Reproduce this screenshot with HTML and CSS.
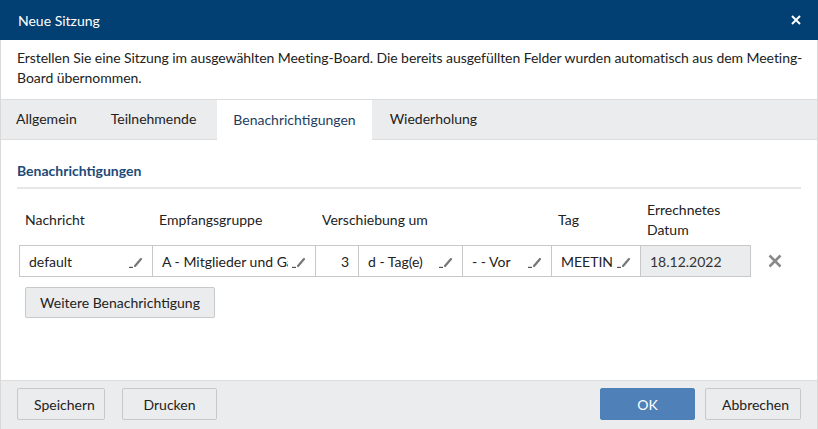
FILE: index.html
```html
<!DOCTYPE html>
<html lang="de">
<head>
<meta charset="utf-8">
<link rel="stylesheet" href="styles.css">
</head>
<body>
<div class="dialog">
  <div class="titlebar">
    <span class="title">Neue Sitzung</span>
    <span class="close">
      <svg width="10" height="10" viewBox="0 0 10 10"><path d="M1 1 L9 9 M9 1 L1 9" stroke="#fff" stroke-width="2"/></svg>
    </span>
  </div>
  <div class="intro">Erstellen Sie eine Sitzung im ausgewählten Meeting-Board. Die bereits ausgefüllten Felder wurden automatisch aus dem Meeting-Board übernommen.</div>
  <div class="tabs">
    <div class="tab">Allgemein</div>
    <div class="tab">Teilnehmende</div>
    <div class="tab active">Benachrichtigungen</div>
    <div class="tab">Wiederholung</div>
  </div>
  <div class="content">
    <div class="section-title">Benachrichtigungen</div>
    <div class="grid">
      <div class="head">Nachricht</div>
      <div class="head">Empfangsgruppe</div>
      <div class="head span3">Verschiebung um</div>
      <div class="head">Tag</div>
      <div class="head">Errechnetes<br>Datum</div>
      <div class="head"></div>

      <div class="cell first"><span class="val">default</span><svg class="pen" width="14" height="12" viewBox="0 0 14 12"><path d="M0 11.5 H4" stroke="#555" stroke-width="1.4"/><path d="M6 10 L12 3" stroke="#777" stroke-width="2.2" stroke-linecap="round"/></svg></div>
      <div class="cell"><span class="val">A - Mitglieder und Gäste</span><svg class="pen" width="14" height="12" viewBox="0 0 14 12"><path d="M0 11.5 H4" stroke="#555" stroke-width="1.4"/><path d="M6 10 L12 3" stroke="#777" stroke-width="2.2" stroke-linecap="round"/></svg></div>
      <div class="cell num"><span class="val">3</span></div>
      <div class="cell"><span class="val">d - Tag(e)</span><svg class="pen" width="14" height="12" viewBox="0 0 14 12"><path d="M0 11.5 H4" stroke="#555" stroke-width="1.4"/><path d="M6 10 L12 3" stroke="#777" stroke-width="2.2" stroke-linecap="round"/></svg></div>
      <div class="cell"><span class="val">- - Vor</span><svg class="pen" width="14" height="12" viewBox="0 0 14 12"><path d="M0 11.5 H4" stroke="#555" stroke-width="1.4"/><path d="M6 10 L12 3" stroke="#777" stroke-width="2.2" stroke-linecap="round"/></svg></div>
      <div class="cell"><span class="val">MEETING</span><svg class="pen" width="14" height="12" viewBox="0 0 14 12"><path d="M0 11.5 H4" stroke="#555" stroke-width="1.4"/><path d="M6 10 L12 3" stroke="#777" stroke-width="2.2" stroke-linecap="round"/></svg></div>
      <div class="cell readonly"><span class="val">18.12.2022</span></div>
      <div class="del"><svg width="14" height="14" viewBox="0 0 14 14"><path d="M1.5 1.5 L12.5 12.5 M12.5 1.5 L1.5 12.5" stroke="#8a8a8a" stroke-width="2.6"/></svg></div>
    </div>
    <button class="btn more">Weitere Benachrichtigung</button>
  </div>
  <div class="footer">
    <div class="group">
      <button class="btn fbtn">Speichern</button>
      <button class="btn fbtn">Drucken</button>
    </div>
    <div class="group right">
      <button class="btn fbtn primary">OK</button>
      <button class="btn fbtn">Abbrechen</button>
    </div>
  </div>
</div>
</body>
</html>
```

FILE: styles.css
```css
* { box-sizing: border-box; }
html, body { margin: 0; padding: 0; }
body {
  width: 818px;
  height: 429px;
  font-family: Lato, "Noto Sans", sans-serif;
  font-size: 14px;
  color: #222;
  background: #fff;
  overflow: hidden;
}
.dialog {
  width: 818px;
  height: 429px;
  display: flex;
  flex-direction: column;
  border-left: 1px solid #d9d9d9;
  border-right: 1px solid #d9d9d9;
}
.titlebar {
  height: 40px;
  margin: 0 -1px;
  background: #023f72;
  color: #fff;
  display: flex;
  align-items: center;
  justify-content: space-between;
  padding: 0 17px 0 18px;
}
.title { font-size: 14px; }
.close { display: flex; align-items: center; }
.intro {
  height: 59px;
  padding: 8px 10px 0 16px;
  line-height: 20px;
  font-size: 14px;
  letter-spacing: -0.06px;
  color: #222;
}
.tabs {
  height: 41px;
  background: #ebecee;
  border-top: 1px solid #dcdcdc;
  border-bottom: 1px solid #dcdcdc;
  display: flex;
  align-items: stretch;
}
.tab {
  padding: 0 17px 0 15px;
  display: flex;
  align-items: center;
  font-size: 14px;
  color: #222;
  padding-bottom: 2px;
}
.tab + .tab { margin-left: 2px; }
.tab.active {
  background: #fff;
  margin-bottom: -1px;
  color: #1d3d60;
  padding-left: 16px;
  padding-right: 16px;
  margin-left: 4px;
}
.tab.active + .tab { margin-left: 3px; }
.content {
  flex: 1;
  padding: 22px 16px 0 16px;
}
.section-title {
  font-weight: 700;
  color: #1d4a78;
  font-size: 14px;
  padding-bottom: 8px;
  border-bottom: 2px solid #e6e6e6;
}
.grid {
  margin-top: 10px;
  margin-left: 2px;
  display: grid;
  grid-template-columns: 134px 163px 43px 104px 89px 89px 110px 48px;
  grid-template-rows: 46px 32px;
}
.head {
  display: flex;
  align-items: center;
  padding-left: 6px;
  padding-bottom: 5px;
  line-height: 20px;
  font-size: 14px;
  color: #222;
}
.head.span3 { grid-column: span 3; }
.cell {
  border: 1px solid #c8c8c8;
  border-left: none;
  display: flex;
  align-items: center;
  padding: 0 9px;
  gap: 4px;
  font-size: 14px;
  overflow: hidden;
  background: #fff;
}
.cell.first { border-left: 1px solid #c8c8c8; }
.val {
  flex: 1;
  min-width: 0;
  white-space: nowrap;
  overflow: hidden;
}
.cell.num { justify-content: flex-end; }
.cell.num .val { flex: none; }
.cell.readonly { background: #ebecee; color: #333; }
.pen { flex: none; margin-top: 1px; }
.del {
  display: flex;
  align-items: center;
  justify-content: center;
}
.btn {
  font-family: Lato, "Noto Sans", sans-serif;
  font-size: 14px;
  color: #222;
  background: #ebecee;
  border: 1px solid #c8c8c8;
  border-radius: 2px;
  cursor: pointer;
}
.more {
  margin-top: 10px;
  margin-left: 8px;
  height: 31px;
  width: 190px;
}
.footer {
  height: 49px;
  background: #ebecee;
  border-top: 1px solid #dcdcdc;
  display: flex;
  align-items: center;
  justify-content: space-between;
  padding: 0 16px 2px 16px;
}
.group { display: flex; gap: 17px; }
.group.right { gap: 10px; }
.fbtn { height: 32px; padding: 0 16px; }
.footer .group:first-child .fbtn:first-child { width: 88px; }
.footer .group:first-child .fbtn:last-child { width: 95px; }
.primary {
  background: #4f80b8;
  border-color: #4f80b8;
  color: #fff;
  width: 95px;
}
.group.right .fbtn:last-child { width: 96px; }
```
